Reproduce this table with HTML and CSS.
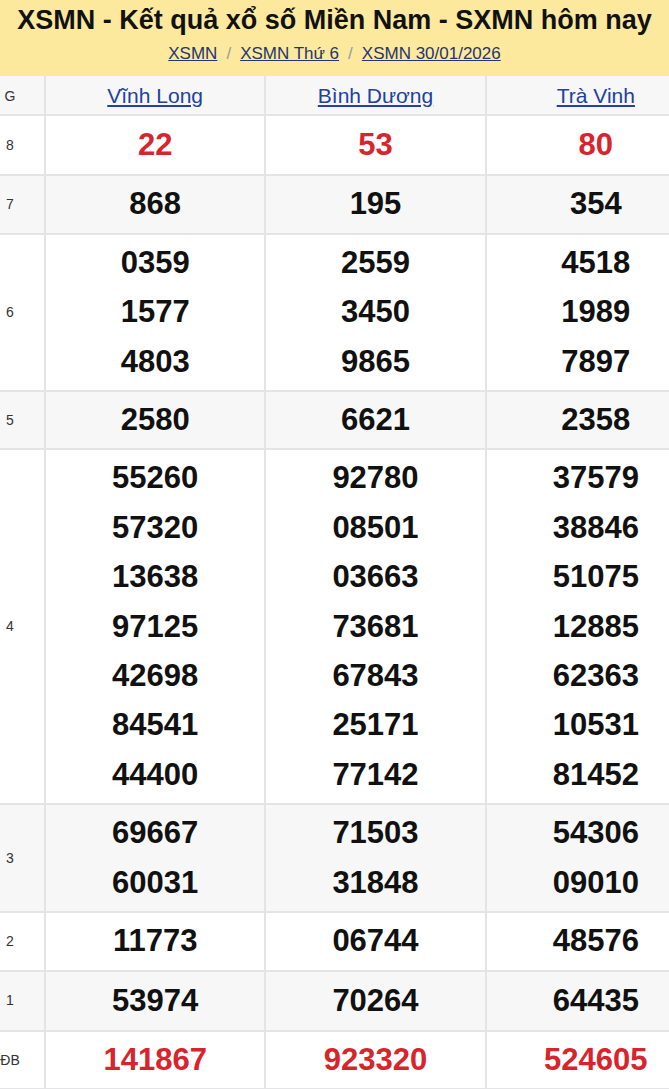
FILE: index.html
```html
<!DOCTYPE html>
<html lang="vi">
<head>
<meta charset="utf-8">
<title>XSMN</title>
<link rel="stylesheet" href="styles.css">
</head>
<body>
<div class="page">
  <header class="head">
    <h1 class="title">XSMN - Kết quả xổ số Miền Nam - SXMN hôm nay</h1>
    <nav class="crumbs">
      <a href="#">XSMN</a><span class="sep">/</span><a href="#">XSMN Thứ 6</a><span class="sep">/</span><a href="#">XSMN 30/01/2026</a>
    </nav>
  </header>
  <table class="results">
    <thead>
      <tr class="alt hdr">
        <th class="lbl">G</th>
        <th><a href="#">Vĩnh Long</a></th>
        <th><a href="#">Bình Dương</a></th>
        <th><a href="#">Trà Vinh</a></th>
      </tr>
    </thead>
    <tbody>
      <tr class="r8">
        <td class="lbl">8</td>
        <td><div class="n red">22</div></td>
        <td><div class="n red">53</div></td>
        <td><div class="n red">80</div></td>
      </tr>
      <tr class="alt">
        <td class="lbl">7</td>
        <td><div class="n">868</div></td>
        <td><div class="n">195</div></td>
        <td><div class="n">354</div></td>
      </tr>
      <tr>
        <td class="lbl">6</td>
        <td><div class="n">0359</div><div class="n">1577</div><div class="n">4803</div></td>
        <td><div class="n">2559</div><div class="n">3450</div><div class="n">9865</div></td>
        <td><div class="n">4518</div><div class="n">1989</div><div class="n">7897</div></td>
      </tr>
      <tr class="alt">
        <td class="lbl">5</td>
        <td><div class="n">2580</div></td>
        <td><div class="n">6621</div></td>
        <td><div class="n">2358</div></td>
      </tr>
      <tr>
        <td class="lbl">4</td>
        <td><div class="n">55260</div><div class="n">57320</div><div class="n">13638</div><div class="n">97125</div><div class="n">42698</div><div class="n">84541</div><div class="n">44400</div></td>
        <td><div class="n">92780</div><div class="n">08501</div><div class="n">03663</div><div class="n">73681</div><div class="n">67843</div><div class="n">25171</div><div class="n">77142</div></td>
        <td><div class="n">37579</div><div class="n">38846</div><div class="n">51075</div><div class="n">12885</div><div class="n">62363</div><div class="n">10531</div><div class="n">81452</div></td>
      </tr>
      <tr class="alt">
        <td class="lbl">3</td>
        <td><div class="n">69667</div><div class="n">60031</div></td>
        <td><div class="n">71503</div><div class="n">31848</div></td>
        <td><div class="n">54306</div><div class="n">09010</div></td>
      </tr>
      <tr>
        <td class="lbl">2</td>
        <td><div class="n">11773</div></td>
        <td><div class="n">06744</div></td>
        <td><div class="n">48576</div></td>
      </tr>
      <tr class="alt r1">
        <td class="lbl">1</td>
        <td><div class="n">53974</div></td>
        <td><div class="n">70264</div></td>
        <td><div class="n">64435</div></td>
      </tr>
      <tr>
        <td class="lbl">ĐB</td>
        <td><div class="n red">141867</div></td>
        <td><div class="n red">923320</div></td>
        <td><div class="n red">524605</div></td>
      </tr>
    </tbody>
  </table>
</div>
</body>
</html>
```

FILE: styles.css
```css
html, body {
  margin: 0;
  padding: 0;
  background: #ffffff;
  overflow: hidden;
}
body {
  font-family: "Liberation Sans", Arial, sans-serif;
  color: #111;
}
.page {
  width: 669px;
  overflow: hidden;
}
.head {
  background: #fde99e;
  height: 76px;
  box-sizing: border-box;
  padding-top: 4px;
  text-align: center;
}
.title {
  margin: 0;
  font-size: 27px;
  line-height: 32px;
  font-weight: bold;
  color: #111;
  white-space: nowrap;
}
.crumbs {
  margin-top: 7px;
  font-size: 17px;
  line-height: 22px;
  color: #888;
}
.crumbs a {
  color: #27356a;
  text-decoration: underline;
}
.crumbs .sep {
  margin: 0 9px;
  color: #999;
}
.results {
  border-collapse: collapse;
  table-layout: fixed;
  width: 733px;
  margin-left: -26px;
}
.results th,
.results td {
  border: 2px solid #e4e4e6;
  text-align: center;
  padding: 3px 0 4px;
  vertical-align: middle;
}
.results tr:first-child th {
  border-top: none;
}
.results .lbl {
  width: 68px;
  font-size: 14px;
  font-weight: normal;
  color: #333;
}
.results .alt {
  background: #f7f7f7;
}
.hdr th {
  height: 34px;
  padding: 3px 0 1px;
  font-weight: normal;
  font-size: 21px;
}
.hdr th.lbl {
  font-size: 14px;
}
.hdr a {
  color: #2141a3;
  text-decoration: underline;
}
.n {
  font-size: 31px;
  line-height: 49.4px;
  font-weight: bold;
  color: #111;
}
.n.red {
  color: #d8252d;
}
.r8 td, .r1 td {
  padding-top: 4px;
  padding-bottom: 5px;
}
```
